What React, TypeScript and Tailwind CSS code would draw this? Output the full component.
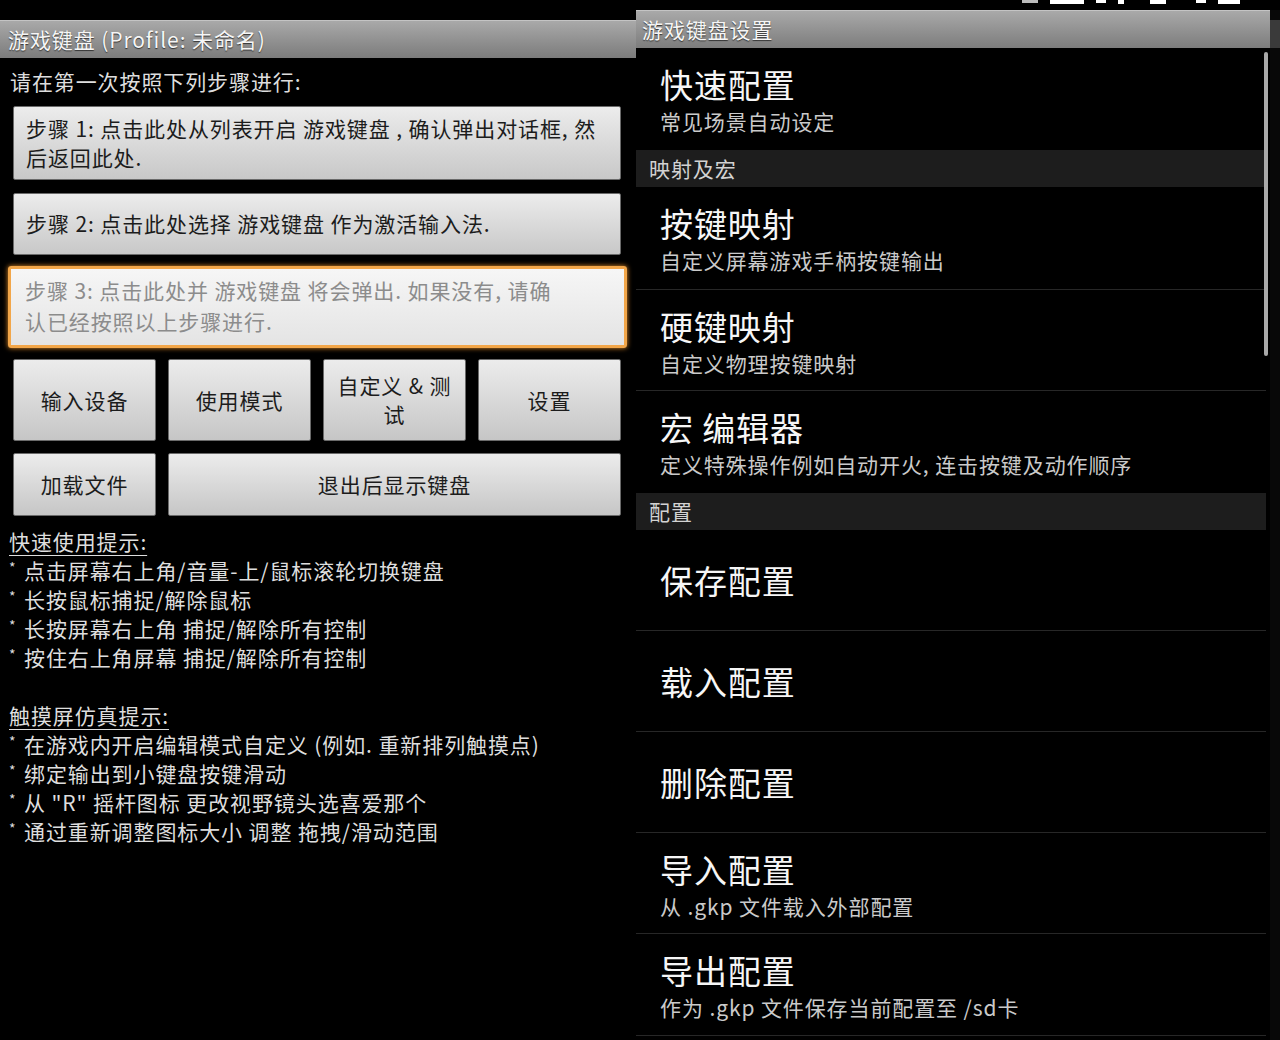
import React from "react";

const FONT = { fontFamily: '"Noto Sans CJK SC", "Noto Sans", sans-serif' };

const quickTips = [
  "点击屏幕右上角/音量-上/鼠标滚轮切换键盘",
  "长按鼠标捕捉/解除鼠标",
  "长按屏幕右上角 捕捉/解除所有控制",
  "按住右上角屏幕 捕捉/解除所有控制",
];

const touchTips = [
  "在游戏内开启编辑模式自定义 (例如. 重新排列触摸点)",
  "绑定输出到小键盘按键滑动",
  "从 \"R\" 摇杆图标 更改视野镜头选喜爱那个",
  "通过重新调整图标大小 调整 拖拽/滑动范围",
];

function Tip({ text }: { text: string }) {
  return (
    <div className="flex leading-[29px]">
      <span className="w-[15px] shrink-0 text-[14px] leading-[22px]">*</span>
      <span>{text}</span>
    </div>
  );
}

function GrayButton({ children, className = "" }: { children: React.ReactNode; className?: string }) {
  return (
    <div
      className={`flex items-center justify-center text-center px-[12px] leading-[29px] text-[#1c1c1c] bg-gradient-to-b from-[#ececec] to-[#c6c6c6] border border-[#6a6a6a] rounded-[2px] ${className}`}
    >
      {children}
    </div>
  );
}

function LeftPanel() {
  return (
    <div className="w-[636px] shrink-0 pt-[20px] text-[21px] text-[#dedede]">
      <div className="h-[38px] flex items-center pl-[8px] bg-gradient-to-b from-[#a9a9a9] to-[#7c7c7c] border-t border-[#c4c4c4] text-[#f6f6f6] [text-shadow:0_1px_1px_#333]">
        游戏键盘 (Profile: 未命名)
      </div>

      <div className="pl-[10px] pt-[9px] leading-[29px]">请在第一次按照下列步骤进行:</div>

      <div className="ml-[13px] mr-[15px] mt-[10px] h-[74px] pl-[12px] pr-[6px] pt-[7px] leading-[29px] text-[#1c1c1c] bg-gradient-to-b from-[#ececec] to-[#c8c8c8] border border-[#6a6a6a] rounded-[2px]">
        步骤 1: 点击此处从列表开启 游戏键盘 , 确认弹出对话框, 然
        <br />
        后返回此处.
      </div>

      <div className="ml-[13px] mr-[15px] mt-[13px] h-[62px] pl-[12px] flex items-center text-[#1c1c1c] bg-gradient-to-b from-[#ececec] to-[#c8c8c8] border border-[#6a6a6a] rounded-[2px]">
        步骤 2: 点击此处选择 游戏键盘 作为激活输入法.
      </div>

      <div className="ml-[8px] mr-[9px] mt-[11px] h-[82px] pl-[14px] pt-[6px] leading-[31px] text-[#8c8c8c] bg-gradient-to-b from-[#f6f6f6] to-[#e4e4e4] border-[3px] border-[#f2a649] rounded-[3px] shadow-[0_0_5px_#e8902a]">
        步骤 3: 点击此处并 游戏键盘 将会弹出. 如果没有, 请确
        <br />
        认已经按照以上步骤进行.
      </div>

      <div className="ml-[13px] mr-[15px] mt-[11px] grid grid-cols-4 gap-x-[12px] gap-y-[12px]">
        <GrayButton className="h-[82px]">输入设备</GrayButton>
        <GrayButton className="h-[82px]">使用模式</GrayButton>
        <GrayButton className="h-[82px]">自定义 &amp; 测试</GrayButton>
        <GrayButton className="h-[82px]">设置</GrayButton>
        <GrayButton className="h-[63px]">加载文件</GrayButton>
        <GrayButton className="h-[63px] col-span-3">退出后显示键盘</GrayButton>
      </div>

      <div className="pl-[9px] mt-[11px]">
        <div className="leading-[29px] underline underline-offset-[5px] decoration-1">快速使用提示:</div>
        {quickTips.map((t) => (
          <Tip key={t} text={t} />
        ))}
        <div className="h-[29px]" />
        <div className="leading-[29px] underline underline-offset-[5px] decoration-1">触摸屏仿真提示:</div>
        {touchTips.map((t) => (
          <Tip key={t} text={t} />
        ))}
      </div>
    </div>
  );
}

function Item({ title, sub, divider = true, h = "h-[101px]" }: { title: string; sub?: string; divider?: boolean; h?: string }) {
  return (
    <div
      className={`${h} pl-[24px] mr-[4px] flex flex-col ${sub ? "pt-[15px]" : "justify-center"} ${divider ? "border-b border-[#272727]" : ""}`}
    >
      <div className="text-[33px] leading-[42px] text-[#f6f6f6] whitespace-pre">{title}</div>
      {sub && <div className="text-[21px] leading-[32px] text-[#cacaca]">{sub}</div>}
    </div>
  );
}

function Category({ label }: { label: string }) {
  return (
    <div className="h-[37px] pl-[13px] flex items-center bg-[#1d1d1d] text-[21px] text-[#d2d2d2] mr-[4px]">
      {label}
    </div>
  );
}

function RightPanel() {
  return (
    <div className="flex-1 flex flex-col">
      {/* status bar, icons cut off at the top edge */}
      <div className="h-[10px] flex items-start justify-end gap-[12px] pr-[40px]">
        <div className="w-[16px] h-[3px] bg-[#bbb]" />
        <div className="w-[34px] h-[4px] bg-white" />
        <div className="w-[10px] h-[3px] bg-white" />
        <div className="w-[6px] h-[4px] bg-white mr-[14px]" />
        <div className="w-[16px] h-[4px] bg-white mr-[18px]" />
        <div className="w-[10px] h-[3px] bg-white" />
        <div className="w-[22px] h-[4px] bg-white" />
      </div>
      <div className="flex flex-1">
        <div className="w-[634px] flex flex-col relative">
          <div className="h-[38px] flex items-center pl-[6px] bg-gradient-to-b from-[#a9a9a9] to-[#7d7d7d] border-t border-[#c4c4c4] text-[21px] text-[#f6f6f6] [text-shadow:0_1px_1px_#333]">
            游戏键盘设置
          </div>
          <Item title="快速配置" sub="常见场景自动设定" divider={false} h="h-[102px]" />
          <Category label="映射及宏" />
          <Item title="按键映射" sub="自定义屏幕游戏手柄按键输出" h="h-[103px]" />
          <Item title="硬键映射" sub="自定义物理按键映射" h="h-[101px]" />
          <Item title="宏 编辑器" sub="定义特殊操作例如自动开火, 连击按键及动作顺序" divider={false} h="h-[102px]" />
          <Category label="配置" />
          <Item title="保存配置" />
          <Item title="载入配置" />
          <Item title="删除配置" />
          <Item title="导入配置" sub="从 .gkp 文件载入外部配置" />
          <Item title="导出配置" sub="作为 .gkp 文件保存当前配置至 /sd卡" h="h-[102px]" />
          {/* scroll indicator */}
          <div className="absolute right-[2px] top-[42px] w-[4px] h-[304px] rounded-full bg-[#a8a8a8]" />
        </div>
        <div className="flex-1 flex flex-col bg-[#080808]">
          <div className="h-[28px] mt-[10px] bg-[#3a3a3a]" />
        </div>
      </div>
    </div>
  );
}

export default function App() {
  return (
    <div className="w-[1280px] h-[1040px] bg-black flex overflow-hidden tracking-[0.9px]" style={FONT}>
      <LeftPanel />
      <RightPanel />
    </div>
  );
}
